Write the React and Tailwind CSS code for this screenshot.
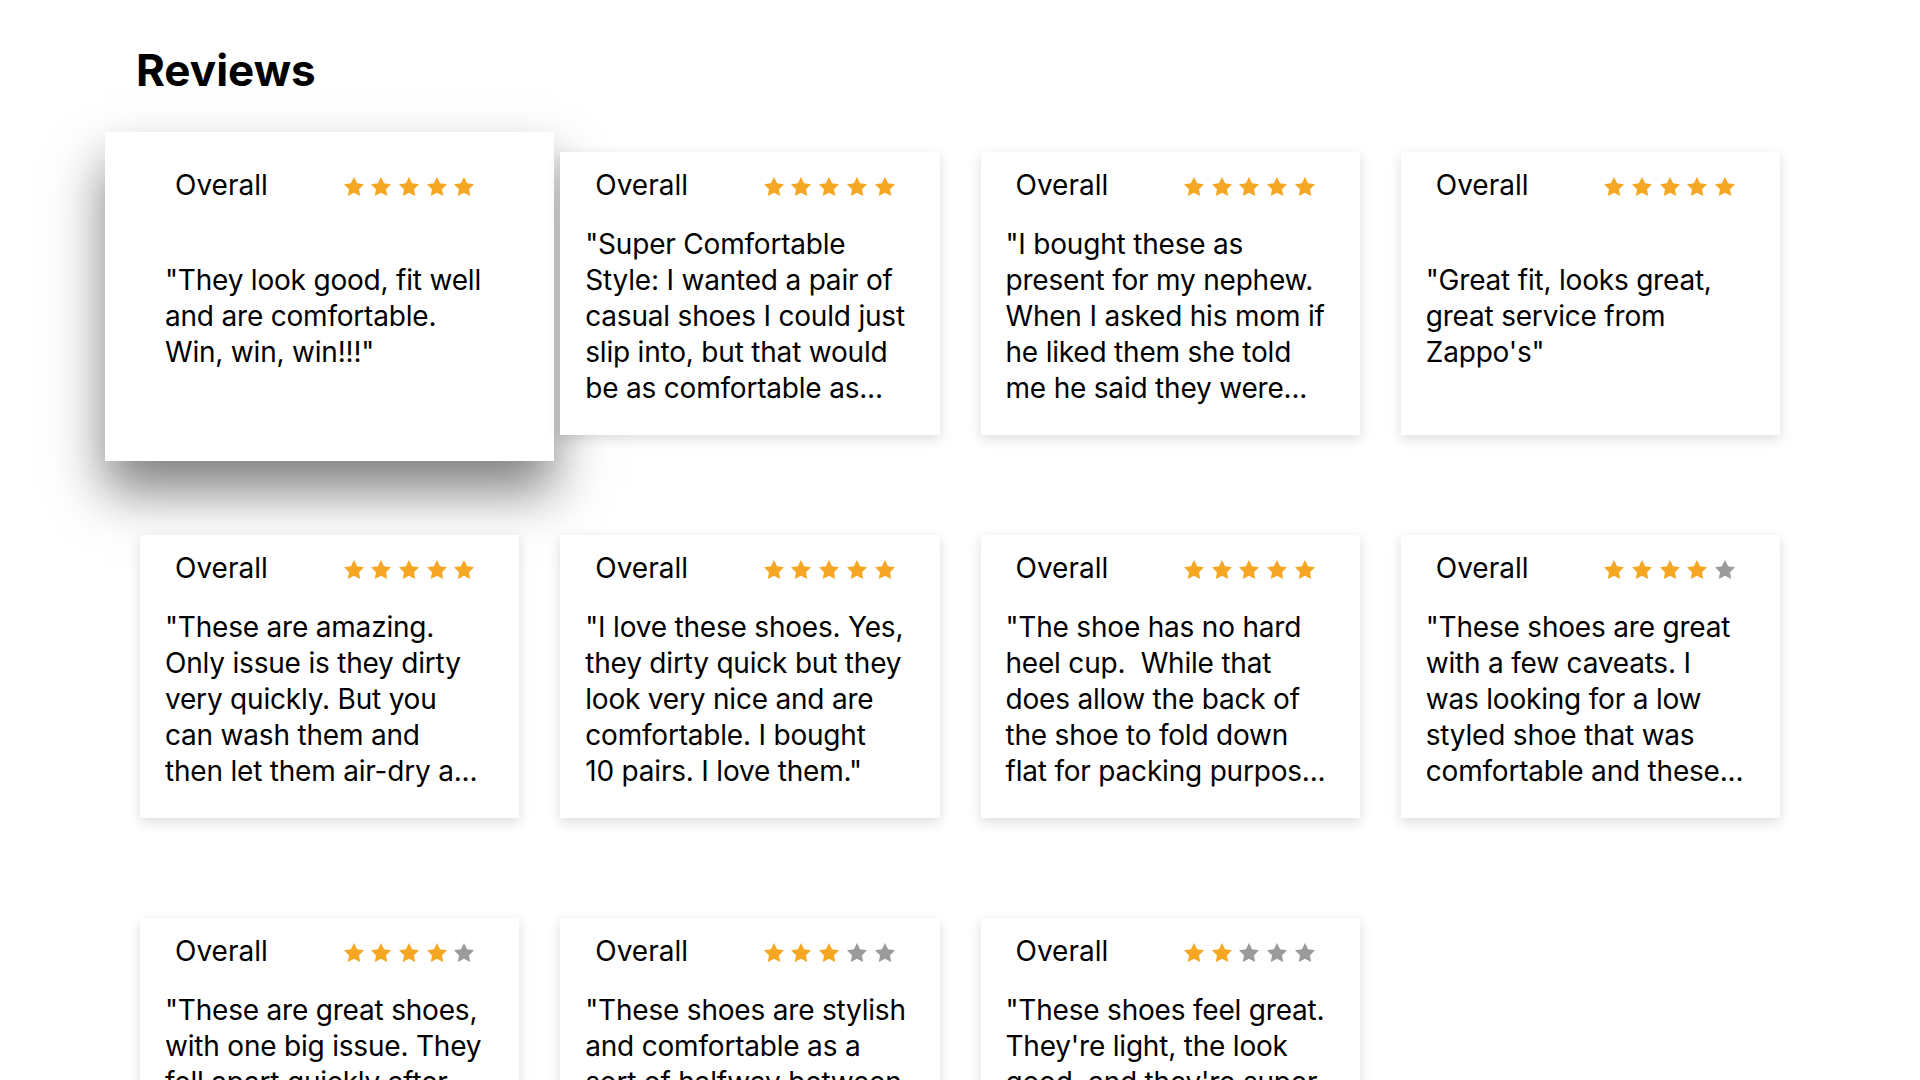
import React from "react";

const reviews = [
  { rating: 5, hover: true, lines: ['"They look good, fit well', "and are comfortable.", 'Win, win, win!!!"'] },
  {
    rating: 5,
    lines: ['"Super Comfortable', "Style: I wanted a pair of", "casual shoes I could just", "slip into, but that would", "be as comfortable as..."],
  },
  {
    rating: 5,
    lines: ['"I bought these as', "present for my nephew.", "When I asked his mom if", "he liked them she told", "me he said they were..."],
  },
  { rating: 5, lines: ['"Great fit, looks great,', "great service from", "Zappo's\""] },
  {
    rating: 5,
    lines: ['"These are amazing.', "Only issue is they dirty", "very quickly. But you", "can wash them and", "then let them air-dry a..."],
  },
  {
    rating: 5,
    lines: ['"I love these shoes. Yes,', "they dirty quick but they", "look very nice and are", "comfortable. I bought", '10 pairs. I love them."'],
  },
  {
    rating: 5,
    lines: ['"The shoe has no hard', "heel cup.\u00a0 While that", "does allow the back of", "the shoe to fold down", "flat for packing purpos..."],
  },
  {
    rating: 4,
    lines: ['"These shoes are great', "with a few caveats. I", "was looking for a low", "styled shoe that was", "comfortable and these..."],
  },
  {
    rating: 4,
    lines: ['"These are great shoes,', "with one big issue. They", "fell apart quickly after", "only a couple of weeks", "of regular wear. The..."],
  },
  {
    rating: 3,
    lines: ['"These shoes are stylish', "and comfortable as a", "sort of halfway between", "a sneaker and a dress", "shoe. They look great..."],
  },
  {
    rating: 2,
    lines: ['"These shoes feel great.', "They're light, the look", "good, and they're super", "comfortable to wear all", "day long. The only..."],
  },
];

function Star({ filled }) {
  return (
    <svg width="20" height="19" viewBox="2 2 20 19" className="block">
      <polygon
        points="12,2 15.09,8.26 22,9.27 17,14.14 18.18,21.02 12,17.77 5.82,21.02 7,14.14 2,9.27 8.91,8.26"
        fill={filled ? "#F5A623" : "#9B9B9B"}
      />
    </svg>
  );
}

function Card({ rating, lines, hover }) {
  return (
    <div className="relative h-[283px] bg-white shadow-[0_4px_12px_rgba(0,0,0,0.14)]">
      {hover && (
        <div className="absolute -top-[20px] -bottom-[26px] -left-[35px] -right-[35px] bg-white shadow-[0_30px_50px_rgba(0,0,0,0.5)]" />
      )}
      <div className="relative flex h-full flex-col">
        <div className="flex items-center justify-between pl-[35px] pr-[45px] pt-[15px]">
          <span className="text-[28px] leading-[36px]">Overall</span>
          <div className="mt-[2px] flex gap-[7.7px]">
            {[0, 1, 2, 3, 4].map((i) => (
              <Star key={i} filled={i < rating} />
            ))}
          </div>
        </div>
        <div className="flex flex-1 items-center pl-[25px] pr-[20px] pt-[23px] pb-[29px]">
          <p className="text-[28px] leading-[36px] tracking-[-0.2px]">
            {lines.map((l, i) => (
              <span key={i} className="block whitespace-nowrap">
                {l}
              </span>
            ))}
          </p>
        </div>
      </div>
    </div>
  );
}

export default function App() {
  return (
    <div className="min-h-screen bg-white font-['Inter',sans-serif] text-black">
      <div className="px-[140px] pt-[48px]">
        <h1 className="-ml-[4px] text-[44px] font-bold leading-none">Reviews</h1>
        <div className="mt-[60px] grid grid-cols-4 gap-x-[41px] gap-y-[100px]">
          {reviews.map((r, i) => (
            <Card key={i} {...r} />
          ))}
        </div>
      </div>
    </div>
  );
}
